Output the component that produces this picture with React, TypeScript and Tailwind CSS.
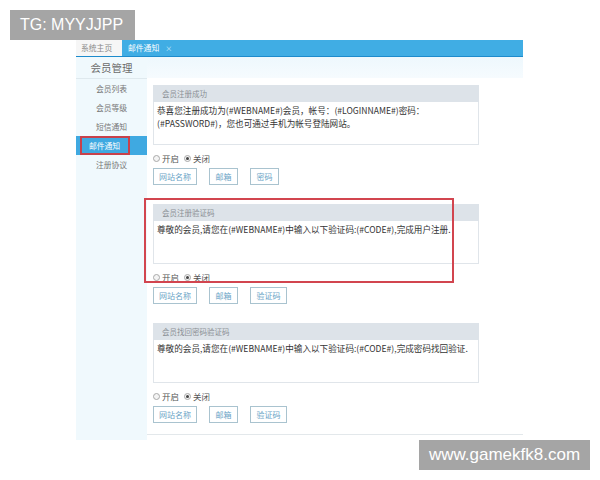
import React from "react";

const cjk = "font-['Noto_Sans_CJK_SC','Noto_Sans',sans-serif]";

function Radio({ checked }: { checked?: boolean }) {
  return (
    <span className="inline-flex items-center justify-center w-[7px] h-[7px] rounded-full border border-[#a9a9a9] bg-[#f4f4f4]">
      {checked && <span className="w-[3px] h-[3px] rounded-full bg-[#444]" />}
    </span>
  );
}

function Section({
  title,
  lines,
  buttons,
  highlight,
}: {
  title: string;
  lines: string[];
  buttons: { label: string; w: string }[];
  highlight?: boolean;
}) {
  return (
    <div className="relative w-[326px]">
      {highlight && (
        <div className="absolute left-[-9px] top-[-6px] w-[310px] h-[85px] border-2 border-[#d2454f] pointer-events-none" />
      )}
      <div className="h-[17px] bg-[#dde3e9] flex items-center pl-[9px] text-[7.5px] text-[#8a8f94]">{title}</div>
      <div className="h-[43px] border border-t-0 border-[#e0e5ea] bg-white pl-[3px] pt-[2px] text-[8.6px] leading-[13px] text-[#333]">
        {lines.map((l, i) => (
          <div key={i} className="whitespace-nowrap">
            {l}
          </div>
        ))}
      </div>
      <div className="mt-[7px] h-[13px] flex items-center gap-[2px] text-[8.5px] text-[#555]">
        <Radio />
        <span className="mr-[3px]">开启</span>
        <Radio checked />
        <span>关闭</span>
      </div>
      <div className="mt-[3px] flex gap-[12px]">
        {buttons.map((b) => (
          <div
            key={b.label}
            className={`${b.w} h-[17px] border border-[#a9c3cf] bg-white flex items-center justify-center text-[8px] text-[#6aa4c6]`}
          >
            {b.label}
          </div>
        ))}
      </div>
    </div>
  );
}

export default function App() {
  const items = ["会员列表", "会员等级", "短信通知", "邮件通知", "注册协议"];
  return (
    <div className={`relative w-[600px] h-[480px] bg-white overflow-hidden ${cjk}`}>
      <div className="ml-[76px] pt-[40px] w-[447px]">
        {/* tab bar */}
        <div className="h-[17px] flex bg-[#40ade4] border-b border-[#1d8bcc]">
          <div className="w-[46px] h-full bg-[#f6f6f6] flex items-center pl-[5px] text-[7.8px] text-[#8a8a8a]">系统主页</div>
          <div className="h-full flex items-center pl-[6px] text-[7.8px] text-white">
            <span>邮件通知</span>
            <span className="ml-[6px] text-[7px] text-[#d6eefb]">×</span>
          </div>
        </div>
        {/* body */}
        <div className="flex">
          <div className="w-[71px] h-[383px] bg-[#f0f9fd] flex flex-col">
            <div className="h-[22px] border-b border-[#dfe9ee] flex items-center justify-center text-[10.5px] text-[#6b6b6b]">
              会员管理
            </div>
            {items.map((it) => {
              const active = it === "邮件通知";
              return (
                <div
                  key={it}
                  className={`relative h-[19px] flex items-center justify-center text-[7.8px] ${
                    active ? "bg-[#3fa9e1] text-white" : "text-[#777]"
                  }`}
                >
                  {active && (
                    <div className="absolute left-[4px] top-[0px] w-[50px] h-[19px] border-2 border-[#c8414b]" />
                  )}
                  <span className={active ? "mr-[14px]" : ""}>{it}</span>
                </div>
              );
            })}
          </div>
          <div className="w-[376px] h-[378px] border-b border-[#e3e8eb] flex flex-col">
            <div className="h-[21px] bg-gradient-to-b from-[#eef8fd] to-[#f6fbfe]" />
            <div className="pl-[6px] pt-[7px] flex flex-col gap-[19px]">
              <Section
                title="会员注册成功"
                lines={[
                  "恭喜您注册成功为(#WEBNAME#)会员，帐号：(#LOGINNAME#)密码：",
                  "(#PASSWORD#)，您也可通过手机为帐号登陆网站。",
                ]}
                buttons={[
                  { label: "网站名称", w: "w-[44px]" },
                  { label: "邮箱", w: "w-[29px]" },
                  { label: "密码", w: "w-[29px]" },
                ]}
              />
              <Section
                title="会员注册验证码"
                highlight
                lines={["尊敬的会员,请您在(#WEBNAME#)中输入以下验证码:(#CODE#),完成用户注册."]}
                buttons={[
                  { label: "网站名称", w: "w-[44px]" },
                  { label: "邮箱", w: "w-[29px]" },
                  { label: "验证码", w: "w-[37px]" },
                ]}
              />
              <Section
                title="会员找回密码验证码"
                lines={["尊敬的会员,请您在(#WEBNAME#)中输入以下验证码:(#CODE#),完成密码找回验证."]}
                buttons={[
                  { label: "网站名称", w: "w-[44px]" },
                  { label: "邮箱", w: "w-[29px]" },
                  { label: "验证码", w: "w-[37px]" },
                ]}
              />
            </div>
          </div>
        </div>
      </div>

      {/* watermarks */}
      <div className="absolute left-[10px] top-[10px] w-[125px] h-[30px] bg-[#a5a5a5] flex items-center pl-[10px] text-white text-[16px] font-['Liberation_Sans',sans-serif]">
        TG: MYYJJPP
      </div>
      <div className="absolute left-[419px] top-[440px] w-[171px] h-[30px] bg-[#a5a5a5] flex items-center justify-center text-white text-[17px] font-['Liberation_Sans',sans-serif]">
        www.gamekfk8.com
      </div>
    </div>
  );
}
